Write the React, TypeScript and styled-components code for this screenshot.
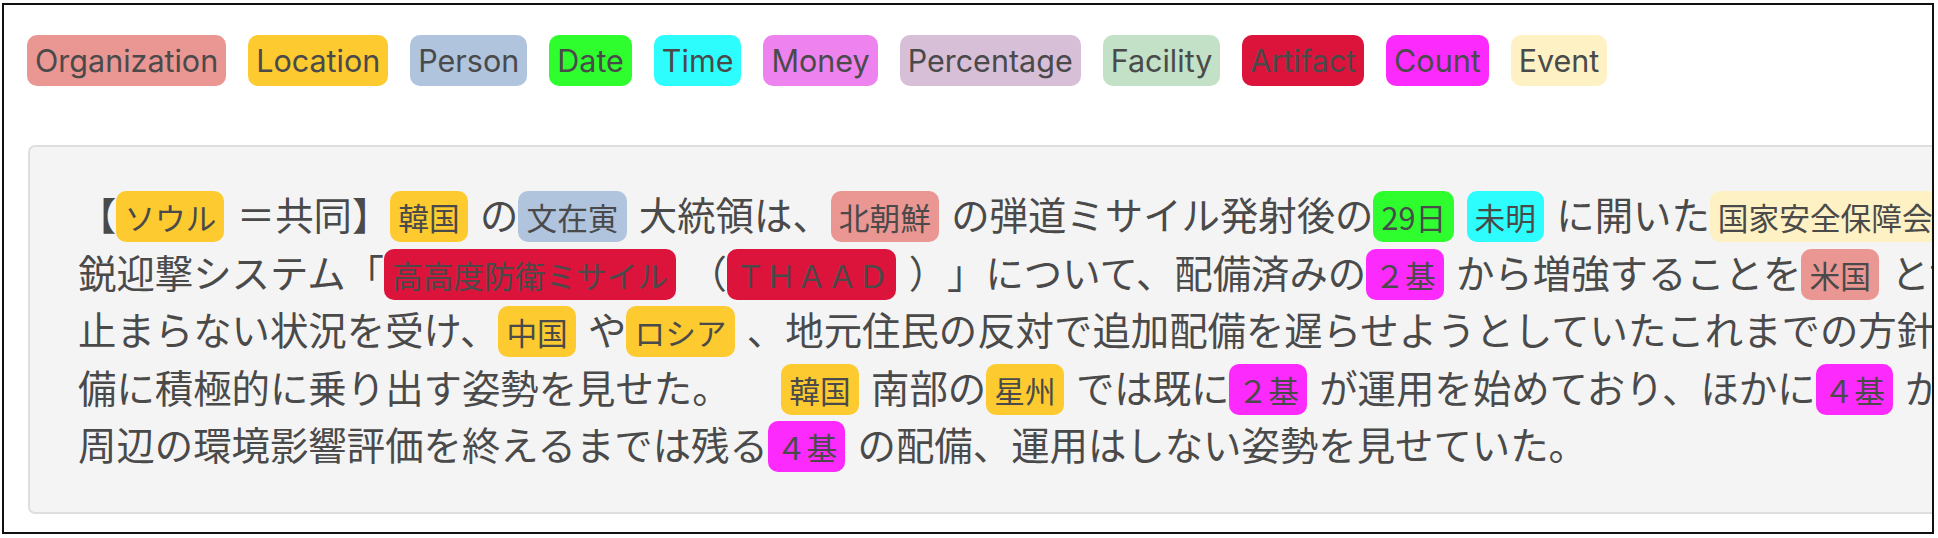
import React from "react";
import styled, { createGlobalStyle } from "styled-components";

const GlobalStyle = createGlobalStyle`
  html, body { margin: 0; padding: 0; background: #ffffff; }
  body { font-family: "Noto Sans CJK JP", "Noto Sans", sans-serif; }
`;

type Kind =
  | "Organization" | "Location" | "Person" | "Date" | "Time" | "Money"
  | "Percentage" | "Facility" | "Artifact" | "Count" | "Event";

const COLORS: Record<Kind, string> = {
  Organization: "#ea9693",
  Location: "#fdca30",
  Person: "#b0c4de",
  Date: "#2efe2e",
  Time: "#2dfdfd",
  Money: "#ee82ee",
  Percentage: "#d8bfd8",
  Facility: "#c2e1c6",
  Artifact: "#dc143c",
  Count: "#fc2afc",
  Event: "#fef1c3",
};

const KINDS = Object.keys(COLORS) as Kind[];

const Frame = styled.div`
  box-sizing: border-box;
  margin: 3px 0 0 2px;
  width: 1932px;
  height: 531px;
  border: 2px solid #111111;
  overflow: hidden;
  background: #ffffff;
`;

const Legend = styled.div`
  display: flex;
  gap: 22px;
  padding: 30px 0 0 23px;
`;

const LegendTag = styled.span<{ $bg: string }>`
  display: inline-block;
  height: 51px;
  line-height: 51px;
  padding: 0 8px;
  border-radius: 10px;
  background: ${(p) => p.$bg};
  color: #4a4a4a;
  font-family: Inter, "Noto Sans", sans-serif;
  font-size: 30.5px;
  white-space: nowrap;
`;

const Panel = styled.div`
  box-sizing: border-box;
  margin: 59px 0 0 24px;
  width: 2400px;
  height: 369px;
  padding: 38px 48px 0 48px;
  background: #f4f4f4;
  border: 2px solid #dedede;
  border-radius: 7px;
  color: #4a4a4a;
  font-family: "Noto Sans CJK JP", "Noto Sans", sans-serif;
  font-size: 38.4px;
  line-height: 57.6px;
  word-spacing: 3.7px;
  text-spacing-trim: space-all;
`;

const Line = styled.div`
  white-space: pre;
`;

const Mark = styled.span<{ $bg: string }>`
  display: inline-block;
  height: 51px;
  line-height: 51px;
  padding: 0 8px;
  border-radius: 10px;
  background: ${(p) => p.$bg};
  color: #4a4a4a;
  font-size: 30.7px;
  word-spacing: normal;
`;

type Seg = string | [Kind, string];

const LINES: Seg[][] = [
  ["【", ["Location", "ソウル"], " ＝共同】", ["Location", "韓国"], " の", ["Person", "文在寅"], " 大統領は、", ["Organization", "北朝鮮"], " の弾道ミサイル発射後の", ["Date", "29日"], " ", ["Time", "未明"], " に開いた", ["Event", "国家安全保障会議"], " で、在韓米軍の最新"],
  ["鋭迎撃システム「", ["Artifact", "高高度防衛ミサイル"], " （", ["Artifact", "ＴＨＡＡＤ"], " ）」について、配備済みの", ["Count", "２基"], " から増強することを", ["Organization", "米国"], " と協議するよう指示した。北朝鮮の挑発が"],
  ["止まらない状況を受け、", ["Location", "中国"], " や", ["Location", "ロシア"], " 、地元住民の反対で追加配備を遅らせようとしていたこれまでの方針を転換、配"],
  ["備に積極的に乗り出す姿勢を見せた。 　", ["Location", "韓国"], " 南部の", ["Location", "星州"], " では既に", ["Count", "２基"], " が運用を始めており、ほかに", ["Count", "４基"], " が搬入済み。文氏は星州"],
  ["周辺の環境影響評価を終えるまでは残る", ["Count", "４基"], " の配備、運用はしない姿勢を見せていた。"],
];

export default function App() {
  return (
    <>
      <GlobalStyle />
      <Frame>
        <Legend>
          {KINDS.map((k) => (
            <LegendTag key={k} $bg={COLORS[k]}>
              {k}
            </LegendTag>
          ))}
        </Legend>
        <Panel>
          {LINES.map((line, i) => (
            <Line key={i}>
              {line.map((seg, j) =>
                typeof seg === "string" ? (
                  <React.Fragment key={j}>{seg}</React.Fragment>
                ) : (
                  <Mark key={j} $bg={COLORS[seg[0]]}>
                    {seg[1]}
                  </Mark>
                )
              )}
            </Line>
          ))}
        </Panel>
      </Frame>
    </>
  );
}
